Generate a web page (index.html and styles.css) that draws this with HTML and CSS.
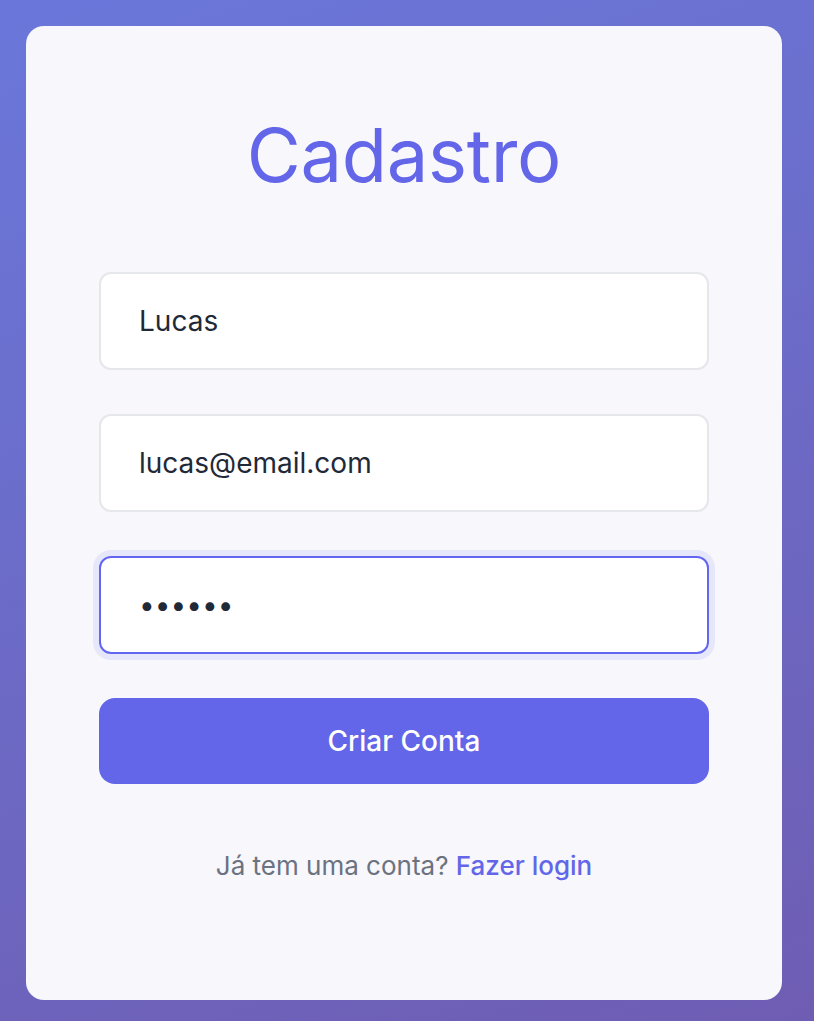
FILE: index.html
```html
<!DOCTYPE html>
<html lang="pt-BR">
<head>
<meta charset="utf-8">
<title>Cadastro</title>
<link rel="stylesheet" href="styles.css">
</head>
<body>
<main class="card">
  <h1 class="title">Cadastro</h1>
  <form class="form">
    <input class="field" type="text" value="Lucas">
    <input class="field" type="email" value="lucas@email.com">
    <input class="field field-focus" type="password" value="123456">
    <button class="btn" type="button">Criar Conta</button>
  </form>
  <p class="footer">Já tem uma conta? <a class="link" href="#">Fazer login</a></p>
</main>
</body>
</html>
```
FILE: styles.css
```css
* { box-sizing: border-box; }
html, body { height: 100%; }
body {
  margin: 0;
  padding: 26px 32px 21px 26px;
  background: linear-gradient(160deg, #6a77da 0%, #6c69c4 55%, #6f5db3 100%);
  font-family: Inter, "Noto Sans", sans-serif;
  display: flex;
}
.card {
  width: 756px;
  height: 974px;
  background: #f7f7fc;
  border-radius: 18px;
  padding: 92px 73px 0;
  display: flex;
  flex-direction: column;
}
.title {
  margin: 0 0 80px;
  text-align: center;
  color: #6366e8;
  font-weight: 400;
  font-size: 74px;
  line-height: 1;
  letter-spacing: -0.3px;
}
.form {
  display: flex;
  flex-direction: column;
  gap: 44px;
}
.field {
  height: 98px;
  width: 100%;
  border: 2px solid #e5e7eb;
  border-radius: 12px;
  background: #fff;
  padding: 0 38px;
  font-family: Inter, "Noto Sans", sans-serif;
  font-size: 28px;
  color: #1f2937;
  outline: none;
}
.field-focus {
  border-color: #6366f1;
  box-shadow: 0 0 0 6px rgba(99, 102, 241, 0.1);
  font-size: 28px;
  letter-spacing: 0;
}
.btn {
  height: 86px;
  border: none;
  border-radius: 16px;
  background: #6366e8;
  color: #fff;
  font-family: Inter, "Noto Sans", sans-serif;
  font-size: 28px;
  font-weight: 500;
}
.footer {
  margin: 66px 0 0;
  text-align: center;
  font-size: 26px;
  color: #6b7280;
}
.link {
  color: #6366e8;
  text-decoration: none;
  font-weight: 500;
}
```
